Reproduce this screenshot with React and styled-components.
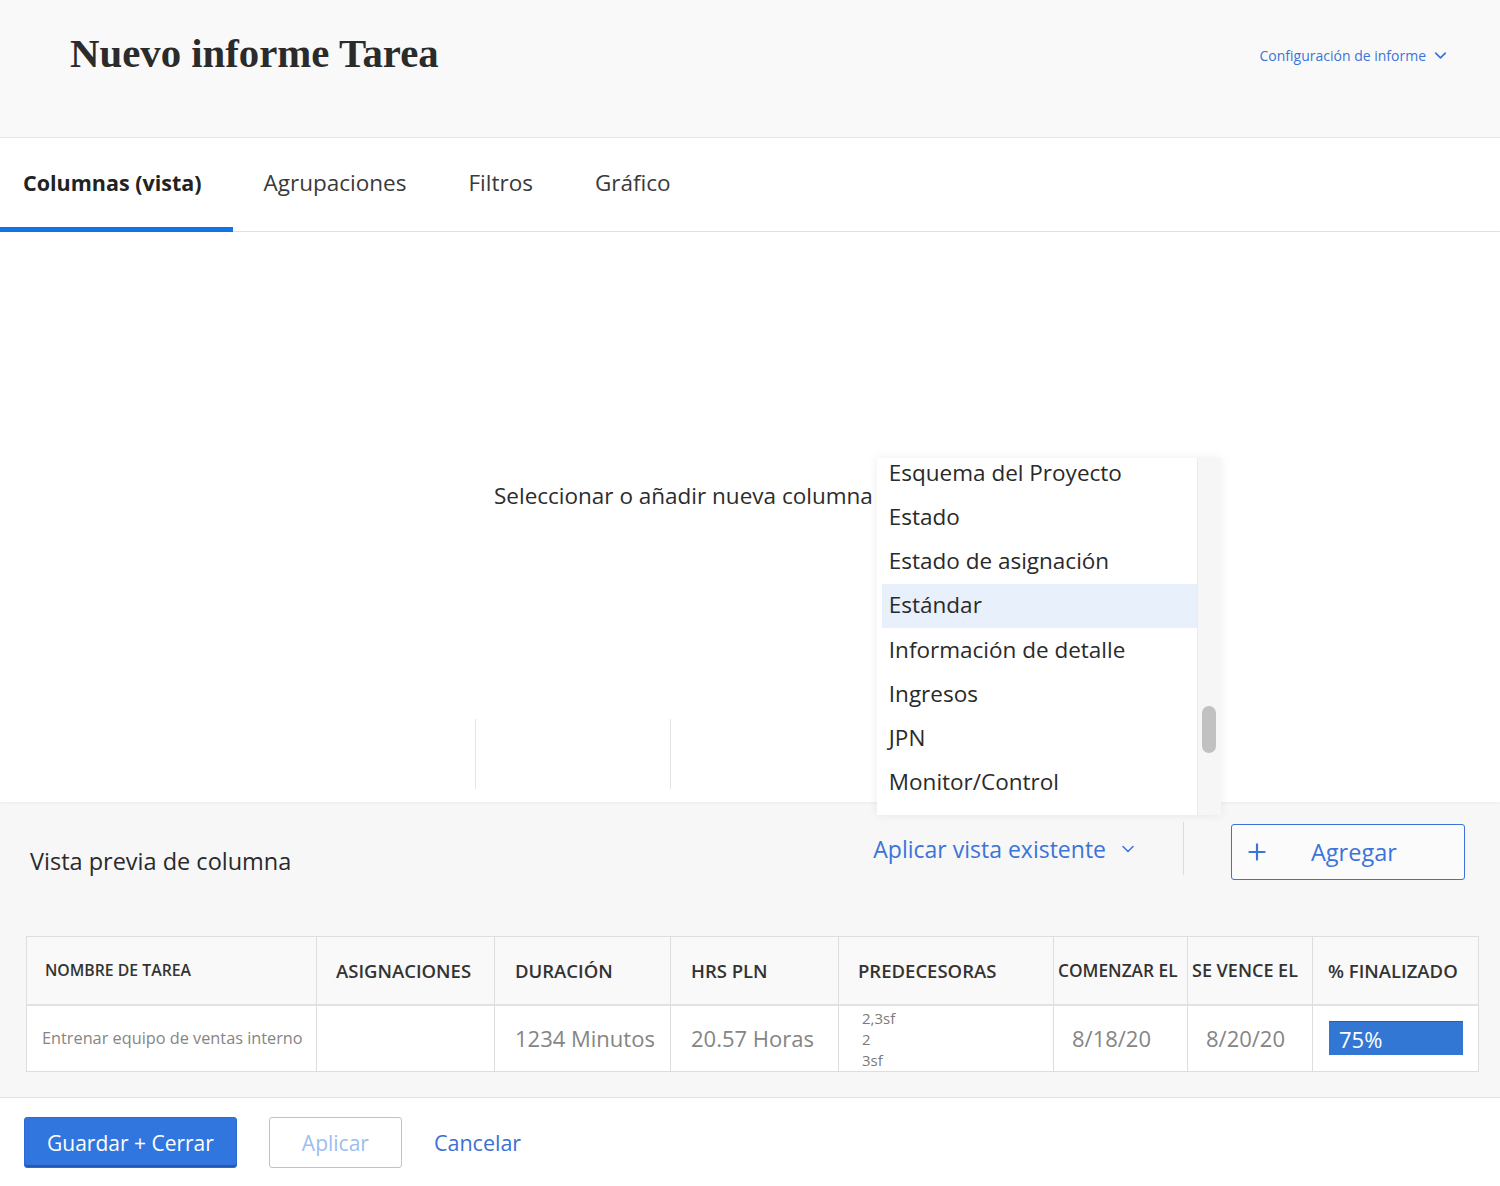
import styled, { createGlobalStyle } from 'styled-components';
import { ChevronDown, Plus } from 'lucide-react';

const SANS = '"Open Sans", "Lato", "Liberation Sans", sans-serif';

const GlobalStyle = createGlobalStyle`
  * { box-sizing: border-box; }
  html, body { margin: 0; padding: 0; background: #ffffff; }
  body { font-family: ${SANS}; color: #2c2c2c; }
`;

const Page = styled.div`
  width: 1500px;
  height: 1186px;
  display: flex;
  flex-direction: column;
  overflow: hidden;
`;

const Header = styled.header`
  height: 138px;
  flex-shrink: 0;
  background: #f9f9f9;
  border-bottom: 1px solid #e6e6e6;
  display: flex;
  justify-content: space-between;
  align-items: flex-start;
  padding: 30px 50px 0 70px;
`;

const Title = styled.h1`
  margin: 0;
  font-family: "Liberation Serif", "Times New Roman", serif;
  font-weight: 700;
  font-size: 40.8px;
  color: #2b2b2b;
`;

const ConfigLink = styled.a`
  margin-top: 16px;
  display: flex;
  align-items: center;
  gap: 5px;
  font-size: 14px;
  color: #3b74d9;
  cursor: pointer;
`;

const TabBar = styled.nav`
  height: 94px;
  flex-shrink: 0;
  display: flex;
  border-bottom: 1px solid #e3e3e3;
  background: #ffffff;
`;

const Tab = styled.div`
  display: flex;
  align-items: center;
  padding: 0 31px;
  &:first-child { padding-left: 23px; }
  font-size: ${(p) => (p.$active ? 21.5 : 22.5)}px;
  font-weight: ${(p) => (p.$active ? 700 : 400)};
  color: ${(p) => (p.$active ? '#222' : '#3a3a3a')};
  border-bottom: 5px solid ${(p) => (p.$active ? '#1473e6' : 'transparent')};
  margin-bottom: -1px;
`;

const Main = styled.section`
  height: 570px;
  flex-shrink: 0;
  background: #ffffff;
  display: flex;
  flex-direction: column;
  position: relative;
  z-index: 2;
  box-shadow: 0 1px 3px rgba(0, 0, 0, 0.05);
`;

const PickerRow = styled.div`
  display: flex;
  align-items: flex-start;
  padding: 226px 0 0 494px;
`;

const Prompt = styled.span`
  margin-top: 22px;
  font-size: 22.5px;
  color: #2c2c2c;
  white-space: nowrap;
`;

const DropdownAnchor = styled.div`
  position: relative;
  width: 344px;
  margin-left: 4px;
`;

const ListBox = styled.div`
  position: absolute;
  top: 0;
  left: 0;
  width: 344px;
  height: 357px;
  background: #ffffff;
  display: flex;
  overflow: hidden;
  box-shadow: 0 0 10px rgba(0, 0, 0, 0.07);
`;

const Options = styled.ul`
  flex: 1;
  list-style: none;
  margin: -7px 0 0;
  padding: 0 0 0 5px;
`;

const Option = styled.li`
  height: 44.2px;
  display: flex;
  align-items: center;
  padding-left: 7px;
  font-size: 22.5px;
  line-height: 1;
  color: #2a2a2a;
  white-space: nowrap;
  background: ${(p) => (p.$selected ? '#e8f0fc' : 'transparent')};
`;

const ScrollTrack = styled.div`
  width: 24px;
  background: #f6f6f6;
  border-left: 1px solid #ececec;
  padding-top: 248px;
  display: flex;
  justify-content: center;
`;

const ScrollThumb = styled.div`
  width: 14px;
  height: 47px;
  border-radius: 7px;
  background: #c1c1c1;
`;

const GhostRow = styled.div`
  margin-top: auto;
  margin-bottom: 13px;
  height: 70px;
  display: flex;
  padding-left: 475px;
`;

const GhostCell = styled.div`
  width: 195px;
  border-left: 1px solid #e4e4e4;
`;

const Preview = styled.section`
  flex: 1;
  background: #f7f7f7;
  padding: 22px 22px 0 26px;
  display: flex;
  flex-direction: column;
`;

const PreviewBar = styled.div`
  height: 56px;
  display: flex;
  align-items: center;
`;

const PreviewTitle = styled.h2`
  margin: 17px 0 0 4px;
  font-size: 23.5px;
  font-weight: 400;
  color: #2a2a2a;
`;

const Actions = styled.div`
  margin-left: auto;
  margin-right: 13px;
  display: flex;
  align-items: center;
  height: 100%;
`;

const ViewPicker = styled.a`
  display: flex;
  align-items: center;
  gap: 12px;
  font-size: 23px;
  color: #3b74d9;
  margin-top: -6px;
  cursor: pointer;
`;

const Divider = styled.span`
  width: 1px;
  height: 53px;
  margin: -8px 47px 0 45px;
  background: #dcdcdc;
`;

const AddButton = styled.button`
  width: 234px;
  height: 56px;
  display: flex;
  align-items: center;
  gap: 41px;
  padding: 0 0 0 12px;
  border: 1.5px solid #3b74d9;
  border-radius: 3px;
  background: #fbfbfb;
  color: #3b74d9;
  font-family: ${SANS};
  font-size: 23.5px;
  cursor: pointer;
`;

const Table = styled.table`
  margin-top: 56px;
  width: 1452px;
  border-collapse: collapse;
  table-layout: fixed;
  border: 1px solid #dedede;
`;

const Th = styled.th`
  height: 68px;
  padding: 0 0 0 ${(p) => p.$pad}px;
  text-align: left;
  background: #f9f9f9;
  border: 1px solid #dedede;
  border-bottom: 2px solid #e2e2e2;
  font-size: ${(p) => p.$size || 18.5}px;
  font-weight: 600;
  color: #333;
  white-space: nowrap;
  overflow: hidden;
`;

const Td = styled.td`
  height: 67px;
  padding: 0 0 0 ${(p) => p.$pad}px;
  background: #ffffff;
  border: 1px solid #dedede;
  font-size: ${(p) => p.$size || 22}px;
  color: #858585;
  white-space: nowrap;
`;

const PredList = styled.div`
  display: flex;
  flex-direction: column;
  font-size: 15px;
  line-height: 21px;
  color: #7a7a7a;
  padding-top: 2px;
`;

const Progress = styled.div`
  width: 134px;
  height: 34px;
  background: #3277d4;
  border-top: 1px solid #1f5fc0;
  display: flex;
  align-items: center;
  padding-left: 10px;
  color: #ffffff;
  font-size: 22px;
`;

const Footer = styled.footer`
  height: 89px;
  flex-shrink: 0;
  border-top: 1px solid #e2e2e2;
  background: #ffffff;
  display: flex;
  align-items: flex-start;
  gap: 32px;
  padding: 19px 0 0 24px;
`;

const Button = styled.button`
  height: 51px;
  padding: 0 ${(p) => p.$padX}px;
  border-radius: 3px;
  font-family: ${SANS};
  font-size: 21px;
  cursor: pointer;
  border: 1.5px solid ${(p) => (p.$primary ? '#2c6ad4' : '#a9c6f0')};
  background: ${(p) => (p.$primary ? '#3176de' : '#ffffff')};
  color: ${(p) => (p.$primary ? '#ffffff' : '#9dbdee')};
  box-shadow: ${(p) => (p.$primary ? 'inset 0 -2px 0 #2359b5' : 'none')};
`;

const LinkButton = styled.a`
  height: 51px;
  display: flex;
  align-items: center;
  font-size: 21.5px;
  color: #3b6fd3;
  cursor: pointer;
`;

const tabs = ['Columnas (vista)', 'Agrupaciones', 'Filtros', 'Gráfico'];

const options = [
  'Esquema del Proyecto',
  'Estado',
  'Estado de asignación',
  'Estándar',
  'Información de detalle',
  'Ingresos',
  'JPN',
  'Monitor/Control',
  '',
];

const columns = [
  { label: 'NOMBRE DE TAREA', width: 290, pad: 18, size: 15.8 },
  { label: 'ASIGNACIONES', width: 178, pad: 19 },
  { label: 'DURACIÓN', width: 176, pad: 20 },
  { label: 'HRS PLN', width: 168, pad: 20 },
  { label: 'PREDECESORAS', width: 215, pad: 19 },
  { label: 'COMENZAR EL', width: 134, pad: 4, size: 17.3 },
  { label: 'SE VENCE EL', width: 125, pad: 4, size: 18 },
  { label: '% FINALIZADO', width: 166, pad: 15 },
];

const percent = 75;

export default function App() {
  return (
    <Page>
      <GlobalStyle />
      <Header>
        <Title>Nuevo informe Tarea</Title>
        <ConfigLink>
          Configuración de informe <ChevronDown size={19} strokeWidth={2.2} />
        </ConfigLink>
      </Header>

      <TabBar>
        {tabs.map((t, i) => (
          <Tab key={t} $active={i === 0}>
            {t}
          </Tab>
        ))}
      </TabBar>

      <Main>
        <PickerRow>
          <Prompt>Seleccionar o añadir nueva columna</Prompt>
          <DropdownAnchor>
            <ListBox>
              <Options>
                {options.map((o, i) => (
                  <Option key={i} $selected={o === 'Estándar'}>
                    {o}
                  </Option>
                ))}
              </Options>
              <ScrollTrack>
                <ScrollThumb />
              </ScrollTrack>
            </ListBox>
          </DropdownAnchor>
        </PickerRow>
        <GhostRow>
          <GhostCell />
          <GhostCell />
        </GhostRow>
      </Main>

      <Preview>
        <PreviewBar>
          <PreviewTitle>Vista previa de columna</PreviewTitle>
          <Actions>
            <ViewPicker>
              Aplicar vista existente <ChevronDown size={20} strokeWidth={1.8} />
            </ViewPicker>
            <Divider />
            <AddButton>
              <Plus size={26} strokeWidth={2} />
              Agregar
            </AddButton>
          </Actions>
        </PreviewBar>

        <Table>
          <colgroup>
            {columns.map((c) => (
              <col key={c.label} style={{ width: c.width }} />
            ))}
          </colgroup>
          <thead>
            <tr>
              {columns.map((c) => (
                <Th key={c.label} $pad={c.pad} $size={c.size}>
                  {c.label}
                </Th>
              ))}
            </tr>
          </thead>
          <tbody>
            <tr>
              <Td $pad={15} $size={16.3}>
                Entrenar equipo de ventas interno
              </Td>
              <Td $pad={20} />
              <Td $pad={20}>1234 Minutos</Td>
              <Td $pad={20}>20.57 Horas</Td>
              <Td $pad={23}>
                <PredList>
                  <span>2,3sf</span>
                  <span>2</span>
                  <span>3sf</span>
                </PredList>
              </Td>
              <Td $pad={18}>8/18/20</Td>
              <Td $pad={18}>8/20/20</Td>
              <Td $pad={16}>
                <Progress>{percent}%</Progress>
              </Td>
            </tr>
          </tbody>
        </Table>
      </Preview>

      <Footer>
        <Button $primary $padX={22}>
          Guardar + Cerrar
        </Button>
        <Button $padX={32}>Aplicar</Button>
        <LinkButton>Cancelar</LinkButton>
      </Footer>
    </Page>
  );
}
